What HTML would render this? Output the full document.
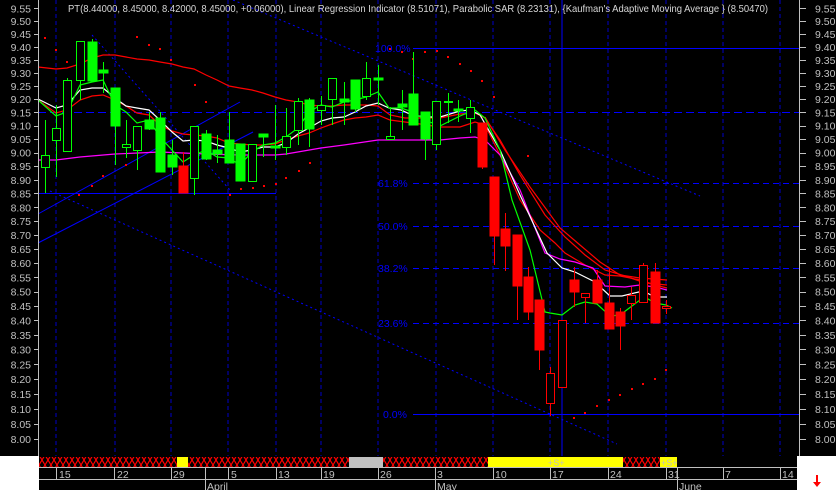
<!DOCTYPE html>
<html><head><meta charset="utf-8"><style>
html,body{margin:0;padding:0;background:#000;width:836px;height:490px;overflow:hidden}
svg{display:block}
text{font-family:"Liberation Sans",sans-serif}
</style></head><body>
<svg width="836" height="490" xmlns="http://www.w3.org/2000/svg">
<defs>
<pattern id="xh" width="6" height="10" patternUnits="userSpaceOnUse">
<rect width="6" height="10" fill="#000"/>
<path d="M0,0 L6,10 M6,0 L0,10" stroke="#ff0000" stroke-width="1.2"/>
</pattern>
</defs>
<rect width="836" height="490" fill="#000"/>
<g stroke="#0000c8" stroke-dasharray="4,3" stroke-width="1">
<path d="M56,0V456M115,0V456M171,0V456M228,0V456M276,0V456M321,0V456M378,0V456M436,0V456M493,0V456M550,0V456M608,0V456M666,0V456M723,0V456M780,0V456"/>
</g>
<line x1="562" y1="0" x2="562" y2="456" stroke="#0000ff"/>
<line x1="38" y1="112.5" x2="800" y2="112.5" stroke="#0000ff" stroke-dasharray="8,4"/>
<line x1="413" y1="48.5" x2="800" y2="48.5" stroke="#0000ff"/>
<g stroke="#0000ff" stroke-dasharray="6,4">
<path d="M413,183.5H800M413,226.5H800M413,268.5H800M413,323.5H800"/>
</g>
<line x1="413" y1="414.5" x2="800" y2="414.5" stroke="#0000ff"/>
<line x1="38" y1="193.5" x2="276" y2="193.5" stroke="#0000ff"/>
<g fill="#0000ff" font-size="10.5">
<text x="375" y="52">100.0%</text>
<text x="378" y="187">61.8%</text>
<text x="378" y="230">50.0%</text>
<text x="378" y="272">38.2%</text>
<text x="378" y="327">23.6%</text>
<text x="383" y="418">0.0%</text>
</g>
<line x1="38" y1="214" x2="240" y2="102" stroke="#0000ff"/>
<line x1="38" y1="243" x2="253" y2="132" stroke="#0000ff"/>
<g stroke="#0000ff" stroke-dasharray="2,3">
<line x1="50" y1="191" x2="617" y2="444"/>
<line x1="92" y1="35" x2="230" y2="190"/>
<line x1="233" y1="0" x2="700" y2="196"/>
</g>
<g fill="none" stroke-width="1.2">
<polyline stroke="#ff0000" points="38,67 56,69 67,68 80,64 92,58 103,55 115,55 126,57 137,59 149,60 160,62 172,64 183,67 194,69 206,75 217,80 229,86 240,88 252,90 263,93 275,97 286,100 298,102 309,105 321,106 332,106 344,105 355,105 366,105 378,106 390,115 405,118 420,118 440,118 460,114 475,113 485,118 500,140 520,175 545,215 565,237 585,255 605,270 625,276 645,283 667,285"/>
<polyline stroke="#ff0000" points="485,117 505,150 530,187 560,228 580,245 600,262 620,275 640,278 667,280"/>
<polyline stroke="#ff0000" points="38,100 56,113 67,110 80,100 92,96 103,95 115,100 126,106 137,113 149,115 160,125 172,131 183,134 194,135 206,136 217,138 229,143 240,144 252,145 263,145 275,144 286,140 298,136 309,133 321,128 332,124 344,120 355,118 366,117 378,115 390,120 405,122 420,124 440,127 460,127 475,122 485,125 500,155 520,200 540,230 555,243 565,253 585,265 605,275 620,276 640,280 655,285 667,288"/>
<polyline stroke="#ff00ff" points="38,160 56,160 80,157 115,154 160,152 206,154 240,155 275,155 286,154 321,148 344,145 378,140 412,140 440,140 460,138 475,137 485,140 500,155 520,190 545,253 560,259 575,262 593,268 605,286 625,287 640,285 655,287 667,290"/>
<polyline stroke="#ffffff" points="38,99 56,108 67,105 80,90 92,88 103,88 115,98 126,106 137,108 149,110 160,120 172,132 183,141 194,140 206,141 217,145 229,148 240,152 252,150 263,147 275,147 286,143 298,134 309,128 321,121 332,118 344,117 355,112 366,106 378,103 389,108 401,110 412,115 425,117 440,117 460,111 470,110 480,115 500,150 520,195 547,253 562,268 575,272 595,282 610,296 622,296 643,291 655,297 667,297"/>
<polyline stroke="#00ff00" points="38,100 56,116 67,112 80,85 92,82 103,80 115,105 126,112 137,123 149,120 160,137 172,150 183,162 194,155 206,150 217,157 229,158 240,165 252,152 263,145 275,143 286,137 298,128 309,112 321,105 332,107 344,102 355,100 366,97 378,92 389,108 401,108 413,112 425,120 440,126 460,116 475,110 485,118 500,150 512,200 530,250 545,312 550,313 562,315 575,305 585,302 597,304 610,316 620,315 640,300 643,296 655,303 666,305 672,308"/>
</g>
<g fill="#ff0000">
<rect x="44" y="37" width="2" height="2"/><rect x="55" y="49" width="2" height="2"/><rect x="66" y="61" width="2" height="2"/>
<rect x="136" y="36" width="2" height="2"/><rect x="148" y="44" width="2" height="2"/><rect x="159" y="48" width="2" height="2"/><rect x="170" y="59" width="2" height="2"/>
<rect x="194" y="84" width="2" height="2"/><rect x="205" y="101" width="2" height="2"/>
<rect x="102" y="175" width="2" height="2"/><rect x="125" y="164" width="2" height="2"/><rect x="78" y="194" width="2" height="2"/><rect x="91" y="185" width="2" height="2"/>
<rect x="229" y="194" width="2" height="2"/><rect x="240" y="188" width="2" height="2"/><rect x="252" y="187" width="2" height="2"/><rect x="263" y="185" width="2" height="2"/><rect x="275" y="183" width="2" height="2"/><rect x="285" y="177" width="2" height="2"/><rect x="298" y="170" width="2" height="2"/><rect x="309" y="162" width="2" height="2"/>
<rect x="389" y="48" width="2" height="2"/><rect x="401" y="51" width="2" height="2"/><rect x="412" y="58" width="2" height="2"/><rect x="424" y="51" width="2" height="2"/><rect x="436" y="50" width="2" height="2"/><rect x="447" y="56" width="2" height="2"/><rect x="459" y="63" width="2" height="2"/><rect x="470" y="70" width="2" height="2"/><rect x="481" y="80" width="2" height="2"/><rect x="493" y="96" width="2" height="2"/><rect x="527" y="155" width="2" height="2"/>
<rect x="573" y="417" width="2" height="2"/><rect x="584" y="412" width="2" height="2"/><rect x="596" y="405" width="2" height="2"/><rect x="608" y="399" width="2" height="2"/><rect x="619" y="394" width="2" height="2"/><rect x="631" y="388" width="2" height="2"/><rect x="642" y="383" width="2" height="2"/><rect x="654" y="378" width="2" height="2"/><rect x="665" y="369" width="2" height="2"/>
</g>
<g stroke-width="1">
<g stroke="#00ff00">
<path d="M45.5,120V193M56.5,105V177M67.5,78V151M80.5,41V100M92.5,39V81M103.5,62V93M115.5,88V165M126.5,120V158M137.5,126V170M149.5,112V130M160.5,112V172M172.5,140V175M194.5,126V195M206.5,130V160M217.5,135V163M229.5,112V163M240.5,144V181M252.5,144V182M263.5,134V157M275.5,105V160M286.5,108V155M298.5,98V145M309.5,98V147M321.5,96V125M332.5,78V125M344.5,82V125M355.5,80V112M366.5,62V100M378.5,65V105M390.5,107V139M402.5,90V130M413.5,52V125M425.5,112V160M436.5,101V150M448.5,93V123M458.5,100V122M470.5,100V133"/>
</g>
<g stroke="#ff0000">
<path d="M183.5,152V193M482.5,123V169M494.5,177V265M505.5,213V271M517.5,235V320M528.5,267V320M539.5,300V370M550.5,367V416M562.5,320V387M574.5,267V307M585.5,293V323M597.5,270V303M609.5,268V329M620.5,308V350M631.5,287V320M643.5,263V302M655.5,263V323M666.5,300V314"/>
</g>
<g fill="#00ff00" stroke="#00ff00">
<rect x="88" y="42" width="9" height="39"/><rect x="99" y="70" width="9" height="3"/><rect x="111" y="88" width="9" height="38"/>
<rect x="145" y="120" width="9" height="9"/><rect x="156" y="118" width="9" height="54"/><rect x="168" y="155" width="9" height="12"/>
<rect x="202" y="134" width="9" height="25"/><rect x="213" y="150" width="9" height="4"/><rect x="225" y="140" width="9" height="23"/><rect x="236" y="144" width="9" height="37"/>
<rect x="259" y="134" width="9" height="3"/><rect x="271" y="146" width="9" height="2"/><rect x="305" y="100" width="9" height="29"/>
<rect x="340" y="99" width="9" height="3"/><rect x="351" y="80" width="9" height="29"/><rect x="374" y="78" width="9" height="2"/>
<rect x="398" y="104" width="9" height="3"/><rect x="409" y="94" width="9" height="31"/><rect x="421" y="112" width="9" height="27"/><rect x="454" y="109" width="9" height="2"/>
</g>
<g fill="#000" stroke="#00ff00">
<rect x="41.5" y="155.5" width="8" height="12"/><rect x="52.5" y="128.5" width="8" height="12"/><rect x="63.5" y="80.5" width="8" height="71"/><rect x="76.5" y="41.5" width="8" height="39"/>
<rect x="122.5" y="144.5" width="8" height="3"/><rect x="133.5" y="126.5" width="8" height="24"/><rect x="190.5" y="126.5" width="8" height="52"/><rect x="248.5" y="144.5" width="8" height="37"/>
<rect x="282.5" y="136.5" width="8" height="11"/><rect x="294.5" y="101.5" width="8" height="29"/><rect x="317.5" y="105.5" width="8" height="5"/><rect x="328.5" y="78.5" width="8" height="21"/><rect x="362.5" y="78.5" width="8" height="18"/>
<rect x="386.5" y="136.5" width="8" height="3"/><rect x="432.5" y="101.5" width="8" height="43"/><rect x="444.5" y="101.5" width="8" height="1"/><rect x="466.5" y="107.5" width="8" height="11"/>
</g>
<g fill="#ff0000" stroke="#ff0000">
<rect x="179" y="166" width="9" height="27"/><rect x="478" y="123" width="9" height="44"/><rect x="490" y="177" width="9" height="59"/><rect x="501" y="229" width="9" height="17"/>
<rect x="513" y="235" width="9" height="51"/><rect x="524" y="277" width="9" height="35"/><rect x="535" y="300" width="9" height="50"/><rect x="570" y="280" width="9" height="12"/>
<rect x="593" y="280" width="9" height="23"/><rect x="605" y="303" width="9" height="26"/><rect x="616" y="312" width="9" height="14"/><rect x="651" y="272" width="9" height="51"/>
</g>
<g fill="#000" stroke="#ff0000">
<rect x="546.5" y="373.5" width="8" height="30"/><rect x="558.5" y="320.5" width="8" height="67"/><rect x="581.5" y="293.5" width="8" height="4"/><rect x="627.5" y="295.5" width="8" height="8"/><rect x="639.5" y="265.5" width="8" height="37"/><rect x="662.5" y="306.5" width="8" height="2"/>
</g>
</g>
<text x="68" y="12" fill="#d8d8d8" font-size="10.5" textLength="700" lengthAdjust="spacingAndGlyphs">PT(8.44000, 8.45000, 8.42000, 8.45000, +0.06000), Linear Regression Indicator (8.51071), Parabolic SAR (8.23131), {Kaufman's Adaptive Moving Average } (8.50470)</text>
<line x1="38.5" y1="0" x2="38.5" y2="456" stroke="#c0c0c0"/>
<line x1="799.5" y1="0" x2="799.5" y2="456" stroke="#c0c0c0"/>
<g fill="#c0c0c0" font-size="10.5">
<text x="31" y="12.3" text-anchor="end">9.55</text><text x="31" y="25.1" text-anchor="end">9.50</text><text x="31" y="37.9" text-anchor="end">9.45</text><text x="31" y="50.8" text-anchor="end">9.40</text><text x="31" y="63.8" text-anchor="end">9.35</text><text x="31" y="76.8" text-anchor="end">9.30</text><text x="31" y="90" text-anchor="end">9.25</text><text x="31" y="103.1" text-anchor="end">9.20</text><text x="31" y="116.4" text-anchor="end">9.15</text><text x="31" y="129.7" text-anchor="end">9.10</text><text x="31" y="143.1" text-anchor="end">9.05</text><text x="31" y="156.6" text-anchor="end">9.00</text><text x="31" y="170.2" text-anchor="end">8.95</text><text x="31" y="183.8" text-anchor="end">8.90</text><text x="31" y="197.5" text-anchor="end">8.85</text><text x="31" y="211.3" text-anchor="end">8.80</text><text x="31" y="225.1" text-anchor="end">8.75</text><text x="31" y="239.1" text-anchor="end">8.70</text><text x="31" y="253.1" text-anchor="end">8.65</text><text x="31" y="267.2" text-anchor="end">8.60</text><text x="31" y="281.4" text-anchor="end">8.55</text><text x="31" y="295.7" text-anchor="end">8.50</text><text x="31" y="310" text-anchor="end">8.45</text><text x="31" y="324.5" text-anchor="end">8.40</text><text x="31" y="339" text-anchor="end">8.35</text><text x="31" y="353.6" text-anchor="end">8.30</text><text x="31" y="368.3" text-anchor="end">8.25</text><text x="31" y="383.1" text-anchor="end">8.20</text><text x="31" y="398" text-anchor="end">8.15</text><text x="31" y="413" text-anchor="end">8.10</text><text x="31" y="428" text-anchor="end">8.05</text><text x="31" y="443.2" text-anchor="end">8.00</text>
</g>
<g fill="#c0c0c0" font-size="10.5">
<text x="815" y="12.3">9.55</text><text x="815" y="25.1">9.50</text><text x="815" y="37.9">9.45</text><text x="815" y="50.8">9.40</text><text x="815" y="63.8">9.35</text><text x="815" y="76.8">9.30</text><text x="815" y="90">9.25</text><text x="815" y="103.1">9.20</text><text x="815" y="116.4">9.15</text><text x="815" y="129.7">9.10</text><text x="815" y="143.1">9.05</text><text x="815" y="156.6">9.00</text><text x="815" y="170.2">8.95</text><text x="815" y="183.8">8.90</text><text x="815" y="197.5">8.85</text><text x="815" y="211.3">8.80</text><text x="815" y="225.1">8.75</text><text x="815" y="239.1">8.70</text><text x="815" y="253.1">8.65</text><text x="815" y="267.2">8.60</text><text x="815" y="281.4">8.55</text><text x="815" y="295.7">8.50</text><text x="815" y="310">8.45</text><text x="815" y="324.5">8.40</text><text x="815" y="339">8.35</text><text x="815" y="353.6">8.30</text><text x="815" y="368.3">8.25</text><text x="815" y="383.1">8.20</text><text x="815" y="398">8.15</text><text x="815" y="413">8.10</text><text x="815" y="428">8.05</text><text x="815" y="443.2">8.00</text>
</g>
<g stroke="#c0c0c0">
<path d="M34,8.5H38M34,21.5H38M34,34.5H38M34,47.5H38M34,60.5H38M34,73.5H38M34,86.5H38M34,99.5H38M34,112.5H38M34,126.5H38M34,139.5H38M34,153.5H38M34,166.5H38M34,180.5H38M34,193.5H38M34,207.5H38M34,221.5H38M34,235.5H38M34,249.5H38M34,263.5H38M34,277.5H38M34,292.5H38M34,306.5H38M34,320.5H38M34,335.5H38M34,349.5H38M34,364.5H38M34,379.5H38M34,394.5H38M34,409.5H38M34,424.5H38M34,439.5H38"/>
<path d="M800,8.5H806M800,21.5H806M800,34.5H806M800,47.5H806M800,60.5H806M800,73.5H806M800,86.5H806M800,99.5H806M800,112.5H806M800,126.5H806M800,139.5H806M800,153.5H806M800,166.5H806M800,180.5H806M800,193.5H806M800,207.5H806M800,221.5H806M800,235.5H806M800,249.5H806M800,263.5H806M800,277.5H806M800,292.5H806M800,306.5H806M800,320.5H806M800,335.5H806M800,349.5H806M800,364.5H806M800,379.5H806M800,394.5H806M800,409.5H806M800,424.5H806M800,439.5H806"/>
</g>
<rect x="0" y="456" width="39" height="34" fill="#fff"/>
<rect x="797" y="456" width="39" height="34" fill="#fff"/>
<rect x="39" y="457" width="138" height="10" fill="url(#xh)"/>
<rect x="177" y="457" width="11" height="10" fill="#ffff00"/>
<rect x="188" y="457" width="161" height="10" fill="url(#xh)"/>
<rect x="349" y="457" width="34" height="10" fill="#c0c0c0"/>
<rect x="383" y="457" width="105" height="10" fill="url(#xh)"/>
<rect x="488" y="457" width="135" height="10" fill="#ffff00"/>
<rect x="623" y="457" width="37" height="10" fill="url(#xh)"/>
<rect x="660" y="457" width="17" height="10" fill="#ffff00"/>
<g fill="#c0c0c0" font-size="9"><text x="548" y="466">+S+</text><text x="661" y="466">+S+</text></g>
<g stroke="#c0c0c0">
<line x1="39" y1="467.5" x2="797" y2="467.5"/>
<line x1="39" y1="479.5" x2="797" y2="479.5"/>
<path d="M56.5,467V479M114.5,467V479M171.5,467V479M228.5,467V479M276.5,467V479M321.5,467V479M378.5,467V479M493.5,467V479M550.5,467V479M608.5,467V479M666.5,467V479M723.5,467V479M780.5,467V479"/>
<path d="M205.5,467V490M435.5,467V490M677.5,467V490"/>
</g>
<g fill="#c0c0c0" font-size="10.5">
<text x="59" y="478">15</text><text x="117" y="478">22</text><text x="173" y="478">29</text><text x="231" y="478">5</text><text x="278" y="478">13</text><text x="323" y="478">19</text><text x="380" y="478">26</text><text x="437" y="478">3</text><text x="495" y="478">10</text><text x="552" y="478">17</text><text x="610" y="478">24</text><text x="668" y="478">31</text><text x="725" y="478">7</text><text x="782" y="478">14</text>
<text x="207" y="490">April</text><text x="437" y="490">May</text><text x="679" y="490">June</text>
</g>
<path d="M817,475V484" stroke="#ff0000" stroke-width="2"/>
<path d="M813,482L817,487L821,482Z" fill="#ff0000"/>
</svg>
</body></html>
